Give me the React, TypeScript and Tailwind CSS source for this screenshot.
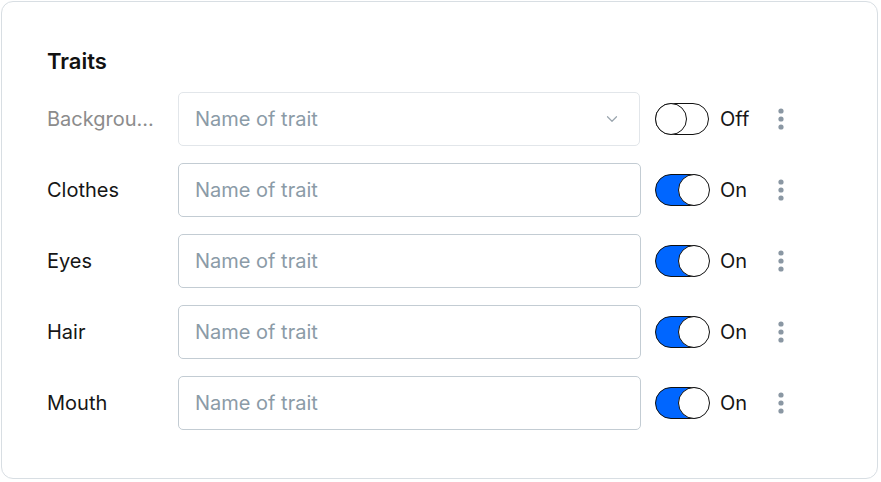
import { ChevronDown } from "lucide-react";

interface TraitRowProps
{
    label: string;
    on: boolean;
    muted?: boolean;
    select?: boolean;
}

function Toggle({ on }: { on: boolean })
{
    return (
        <div className={`relative w-[54px] h-[32px] rounded-full border-[1.5px] border-[#111] shrink-0 ${on ? "bg-[#0066ff]" : "bg-white"}`}>
            <div className={`absolute top-[-1.5px] w-[32px] h-[32px] rounded-full border-[1.5px] border-[#111] bg-white ${on ? "right-[-1.5px]" : "left-[-1.5px]"}`} />
        </div>
    );
}

function Dots()
{
    return (
        <svg width="6" height="22" viewBox="0 0 6 22" className="shrink-0">
            <circle cx="3" cy="3" r="2.6" fill="#8a97a3" />
            <circle cx="3" cy="11" r="2.6" fill="#8a97a3" />
            <circle cx="3" cy="19" r="2.6" fill="#8a97a3" />
        </svg>
    );
}

function TraitRow({ label, on, muted = false, select = false }: TraitRowProps)
{
    return (
        <div className="flex items-center h-[54px]">
            <div className={`w-[131px] shrink-0 whitespace-nowrap text-[20px] leading-[28px] -mt-px ${muted ? "text-[#8c8c8c]" : "text-[#161616]"}`}>{label}</div>
            <div className={`flex items-center justify-between h-[54px] rounded-[5px] border bg-white pl-4 pr-[18px] ${select ? "w-[462px] border-[#e2e6ea]" : "w-[463px] border-[#c3ccd3]"}`}>
                <span className="text-[20px] leading-[28px] -mt-px text-[#8b9ba7]">Name of trait</span>
                {select && <ChevronDown size={18} strokeWidth={1.6} color="#9aa5ae" />}
            </div>
            <div className={`flex items-center ${select ? "ml-[15px]" : "ml-[14px]"}`}>
                <Toggle on={on} />
                <span className="ml-[11px] w-[58px] text-[20px] leading-[28px] -mt-px text-[#161616]">{on ? "On" : "Off"}</span>
                <Dots />
            </div>
        </div>
    );
}

export default function App()
{
    return (
        <div className="w-[881px] h-[482px] bg-white p-px" style={{ fontFamily: "Inter, 'Noto Sans', sans-serif" }}>
            <div className="w-[877px] h-[478px] rounded-[12px] border border-[#d8dee3] bg-white pl-[45px] pt-[45px]">
                <h2 className="text-[22px] leading-[28px] font-semibold text-[#111]">Traits</h2>
                <div className="flex flex-col gap-[17px] mt-[17px]">
                    <TraitRow label="Backgrou..." on={false} muted select />
                    <TraitRow label="Clothes" on />
                    <TraitRow label="Eyes" on />
                    <TraitRow label="Hair" on />
                    <TraitRow label="Mouth" on />
                </div>
            </div>
        </div>
    );
}
